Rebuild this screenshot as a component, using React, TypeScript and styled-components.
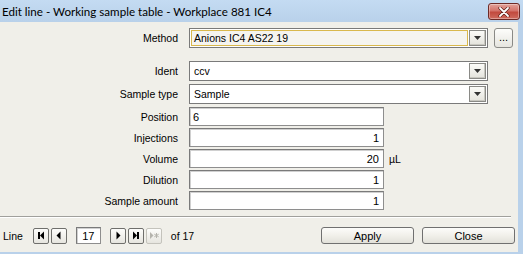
import React from "react";
import styled, { createGlobalStyle } from "styled-components";

const GlobalStyle = createGlobalStyle`
  html, body { margin: 0; padding: 0; background: #ffffff; }
  body {
    width: 523px; height: 256px; overflow: hidden;
    font-family: "Liberation Sans", Arial, sans-serif;
    font-size: 10.5px; color: #000;
  }
`;

const Window = styled.div`
  width: 523px;
  height: 254px;
  display: flex;
  flex-direction: column;
  background: #b9d1ea;
`;

const TitleBar = styled.div`
  height: 22px;
  flex: none;
  display: flex;
  align-items: center;
  justify-content: space-between;
  padding: 0 3px 0 2px;
  background: linear-gradient(#c4dbf2, #b9d1ea);
`;

const Title = styled.div`
  font-family: Lato, "Noto Sans", sans-serif;
  font-size: 11.6px;
  color: #000;
  white-space: nowrap;
`;

const CloseX = styled.div`
  width: 32px;
  height: 17px;
  margin-top: 1px;
  border: 1px solid #6d2a26;
  border-radius: 3px;
  box-sizing: border-box;
  background: linear-gradient(#e2a29a 0%, #d4736a 45%, #c24a3e 55%, #cf6b5e 100%);
  box-shadow: inset 0 0 0 1px rgba(255, 255, 255, 0.35);
  display: flex;
  align-items: center;
  justify-content: center;
`;

const Client = styled.div`
  flex: 1;
  margin: 0 5px 2px 0;
  background: #f0efe9;
  display: flex;
  flex-direction: column;
  padding-top: 6px;
`;

const Row = styled.div<{ $mt: number; $h: number }>`
  display: grid;
  grid-template-columns: 178px auto;
  column-gap: 11px;
  align-items: center;
  height: ${(p) => p.$h}px;
  margin-top: ${(p) => p.$mt}px;
`;

const Label = styled.div`
  text-align: right;
  white-space: nowrap;
`;

const Controls = styled.div`
  display: flex;
  align-items: center;
  gap: 6px;
  height: 100%;
`;

const Combo = styled.div`
  width: 299px;
  height: 20px;
  box-sizing: border-box;
  border: 1px solid #7a7a7a;
  background: #fff;
  display: flex;
  align-items: center;
  padding: 1px;
  gap: 1px;
`;

const ComboText = styled.div<{ $focus?: boolean }>`
  flex: 1;
  height: 100%;
  box-sizing: border-box;
  display: flex;
  align-items: center;
  padding-left: ${(p) => (p.$focus ? 2 : 3)}px;
  background: ${(p) => (p.$focus ? "#f5f4ef" : "#fff")};
  border: ${(p) => (p.$focus ? "1px solid #d9b84c" : "none")};
`;

const DropBtn = styled.div`
  width: 17px;
  height: 16px;
  box-sizing: border-box;
  border: 1px solid #8a8a86;
  background: linear-gradient(#fbfbf8, #e4e3dc);
  box-shadow: inset -1px -1px 0 #c8c7c0;
  display: flex;
  align-items: center;
  justify-content: center;
`;

const DotsBtn = styled.div`
  width: 19px;
  height: 20px;
  box-sizing: border-box;
  border: 1px solid #8a8a86;
  border-radius: 3px;
  background: linear-gradient(#fdfdfb, #e6e5df);
  display: flex;
  align-items: flex-end;
  justify-content: center;
  padding-bottom: 4px;
  font-size: 11px;
  line-height: 1;
`;

const TextBox = styled.div<{ $align?: string; $w?: number }>`
  width: ${(p) => p.$w ?? 195}px;
  height: 19px;
  box-sizing: border-box;
  border: 1px solid #7a7a7a;
  border-right-color: #8e8e8e;
  border-bottom-color: #8e8e8e;
  box-shadow: inset 1px 1px 0 #d0d0d0;
  background: #fff;
  display: flex;
  align-items: center;
  justify-content: ${(p) => (p.$align === "right" ? "flex-end" : "flex-start")};
  padding: 0 4px 0 3px;
  font-size: 11px;
`;

const Unit = styled.div`
  margin-left: -1px;
`;

const Separator = styled.div`
  margin: 6px 7px 0 0;
  height: 1px;
  background: #a0a09c;
  border-bottom: 1px solid #fff;
`;

const Bottom = styled.div`
  display: flex;
  align-items: center;
  margin-top: 9px;
  padding-left: 3px;
  height: 17px;
`;

const NavGroup = styled.div<{ $ml?: number }>`
  display: flex;
  align-items: center;
  gap: 2px;
  margin-left: ${(p) => p.$ml ?? 0}px;
`;

const NavBtn = styled.div<{ $disabled?: boolean }>`
  width: 16px;
  height: 16px;
  box-sizing: border-box;
  border: 1px solid ${(p) => (p.$disabled ? "#c4c3bc" : "#6f6f6c")};
  border-radius: 2px;
  background: linear-gradient(#fdfdfb, #e6e5df);
  display: flex;
  align-items: center;
  justify-content: center;
`;

const LineBox = styled(TextBox)`
  height: 17px;
  margin: 0 9px 0 9px;
  justify-content: center;
  padding: 0;
`;

const OfText = styled.div`
  margin-left: 9px;
`;

const Spacer = styled.div`
  flex: 1;
`;

const PushBtn = styled.div`
  width: 93px;
  height: 17px;
  box-sizing: border-box;
  border: 1px solid #707070;
  border-radius: 3px;
  background: linear-gradient(#fcfcfa 0%, #f1f0ea 50%, #e2e1da 100%);
  display: flex;
  align-items: center;
  justify-content: center;
  font-size: 11px;
`;

const ButtonRow = styled.div`
  display: flex;
  gap: 8px;
  margin-right: 3px;
`;

const Arrow = () => (
  <svg width="7" height="4" viewBox="0 0 7 4">
    <polygon points="0,0 7,0 3.5,4" fill="#333" />
  </svg>
);

const NavIcon = ({ kind, color = "#000" }: { kind: string; color?: string }) => (
  <svg width="10" height="9" viewBox="0 0 10 9">
    {kind === "first" && (
      <>
        <rect x="2" y="1" width="2" height="7" fill={color} />
        <polygon points="8,0.5 8,8.5 4,4.5" fill={color} />
      </>
    )}
    {kind === "prev" && <polygon points="6.5,0.5 6.5,8.5 2.5,4.5" fill={color} />}
    {kind === "next" && <polygon points="3.5,0.5 3.5,8.5 7.5,4.5" fill={color} />}
    {kind === "last" && (
      <>
        <polygon points="2,0.5 2,8.5 6,4.5" fill={color} />
        <rect x="6" y="1" width="2" height="7" fill={color} />
      </>
    )}
    {kind === "new" && (
      <>
        <polygon points="1,1 1,8 4.5,4.5" fill={color} />
        <path d="M7.5 2 V7 M5.3 3.2 L9.7 5.8 M5.3 5.8 L9.7 3.2" stroke={color} strokeWidth="1" />
      </>
    )}
  </svg>
);

const CloseIcon = () => (
  <svg width="12" height="10" viewBox="0 0 12 10">
    <path d="M2 1 L10 9 M10 1 L2 9" stroke="#5a1a14" strokeWidth="3.2" strokeLinecap="round" />
    <path d="M2 1 L10 9 M10 1 L2 9" stroke="#ffffff" strokeWidth="1.8" strokeLinecap="round" />
  </svg>
);

const fields = [
  { label: "Position", value: "6", align: "left", mt: 3 },
  { label: "Injections", value: "1", align: "right", mt: 2 },
  { label: "Volume", value: "20", align: "right", mt: 2, unit: "µL" },
  { label: "Dilution", value: "1", align: "right", mt: 2 },
  { label: "Sample amount", value: "1", align: "right", mt: 2 },
];

export default function App() {
  return (
    <>
      <GlobalStyle />
      <Window>
        <TitleBar>
          <Title>Edit line - Working sample table - Workplace 881 IC4</Title>
          <CloseX>
            <CloseIcon />
          </CloseX>
        </TitleBar>
        <Client>
          <Row $mt={0} $h={20}>
            <Label>Method</Label>
            <Controls>
              <Combo>
                <ComboText $focus>Anions IC4 AS22 19</ComboText>
                <DropBtn>
                  <Arrow />
                </DropBtn>
              </Combo>
              <DotsBtn>...</DotsBtn>
            </Controls>
          </Row>
          <Row $mt={13} $h={20}>
            <Label>Ident</Label>
            <Controls>
              <Combo>
                <ComboText>ccv</ComboText>
                <DropBtn>
                  <Arrow />
                </DropBtn>
              </Combo>
            </Controls>
          </Row>
          <Row $mt={3} $h={20}>
            <Label>Sample type</Label>
            <Controls>
              <Combo>
                <ComboText>Sample</ComboText>
                <DropBtn>
                  <Arrow />
                </DropBtn>
              </Combo>
            </Controls>
          </Row>
          {fields.map((f) => (
            <Row key={f.label} $mt={f.mt} $h={19}>
              <Label>{f.label}</Label>
              <Controls>
                <TextBox $align={f.align}>{f.value}</TextBox>
                {f.unit && <Unit>{f.unit}</Unit>}
              </Controls>
            </Row>
          ))}
          <Separator />
          <Bottom>
            <span>Line</span>
            <NavGroup $ml={10}>
              <NavBtn>
                <NavIcon kind="first" />
              </NavBtn>
              <NavBtn>
                <NavIcon kind="prev" />
              </NavBtn>
            </NavGroup>
            <LineBox $w={25}>17</LineBox>
            <NavGroup>
              <NavBtn>
                <NavIcon kind="next" />
              </NavBtn>
              <NavBtn>
                <NavIcon kind="last" />
              </NavBtn>
              <NavBtn $disabled>
                <NavIcon kind="new" color="#b5b4ad" />
              </NavBtn>
            </NavGroup>
            <OfText>of 17</OfText>
            <Spacer />
            <ButtonRow>
              <PushBtn>Apply</PushBtn>
              <PushBtn>Close</PushBtn>
            </ButtonRow>
          </Bottom>
        </Client>
      </Window>
    </>
  );
}
